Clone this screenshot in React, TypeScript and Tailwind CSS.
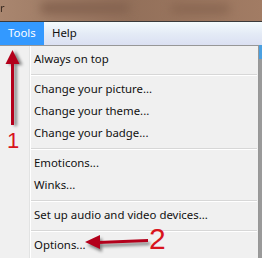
const items: (string | null)[] = [
  "Always on top",
  null,
  "Change your picture...",
  "Change your theme...",
  "Change your badge...",
  null,
  "Emoticons...",
  "Winks...",
  null,
  "Set up audio and video devices...",
  null,
  "Options...",
];

function MenuItem({ label }: { label: string }) {
  return (
    <div className="h-[22px] pl-[3px] leading-[22px] text-[11.4px] text-[#111] whitespace-nowrap">
      {label}
    </div>
  );
}

function Separator() {
  return (
    <div className="h-[8px] pt-[4px] pr-[1px]">
      <div className="border-t border-[#d7d7d7]" />
      <div className="border-t border-white" />
    </div>
  );
}

export default function App() {
  return (
    <div
      className="relative flex flex-col w-[262px] h-[258px] overflow-hidden bg-[#f0f0f0]"
      style={{ fontFamily: '"Noto Sans", "Open Sans", sans-serif' }}
    >
      {/* blurred window title behind */}
      <div className="relative h-[21px] shrink-0 overflow-hidden bg-gradient-to-r from-[#a9866f] via-[#93705a] to-[#a27c64]">
        <div className="absolute left-[40px] top-[2px] w-[90px] h-[12px] rounded-full bg-[#856350] blur-[5px]" />
        <div className="absolute left-[170px] top-[4px] w-[60px] h-[10px] rounded-full bg-[#8a6752] blur-[5px]" />
        <span className="absolute left-0 top-0 text-[11px] text-[#3a2a20] blur-[0.6px]">r</span>
      </div>
      <div className="h-[1px] shrink-0 bg-[#3a3a3a]" />

      {/* menu bar */}
      <div className="flex h-[23px] shrink-0 bg-gradient-to-b from-[#f4fbfd] via-[#e4ebf6] to-[#dbe0f2] text-[11.4px]">
        <div className="w-[44px] bg-[#3399ff] text-white pl-[8px] leading-[22px]">Tools</div>
        <div className="pl-[8px] leading-[22px] text-[#111]">Help</div>
      </div>

      {/* dropdown */}
      <div className="flex flex-1">
        <div className="flex w-[259px] border-t border-r border-[#979797] bg-[#f0f0f0]">
          <div className="w-[29px] shrink-0" />
          <div className="w-[1px] bg-[#e2e3e3]" />
          <div className="w-[1px] bg-white" />
          <div className="flex-1 pt-[2px]">
            {items.map((it, i) =>
              it ? <MenuItem key={i} label={it} /> : <Separator key={i} />
            )}
          </div>
        </div>
        <div className="flex flex-col w-[3px]">
          <div className="h-[14px] bg-[#4ba0e0]" />
          <div className="flex-1 bg-[#9a9a9a]" />
        </div>
      </div>

      {/* annotation 1 */}
      <svg
        className="absolute left-0 top-[48px] drop-shadow-[3px_1px_1.5px_rgba(0,0,0,0.45)]"
        width="30"
        height="82"
        viewBox="0 0 30 82"
      >
        <polygon points="12.5,2 5.5,16 19.5,16" fill="#b3001b" />
        <rect x="11" y="14" width="3" height="63" fill="#b3001b" />
      </svg>
      <div
        className="absolute left-[7px] top-[127px] text-[22px] leading-[28px] text-[#d8141c]"
        style={{ fontFamily: '"Liberation Sans", sans-serif' }}
      >
        1
      </div>

      {/* annotation 2 */}
      <svg
        className="absolute left-[83px] top-[232px] drop-shadow-[2px_3px_1.5px_rgba(0,0,0,0.45)]"
        width="68"
        height="20"
        viewBox="0 0 68 20"
      >
        <polygon points="2,10 17,3 17,17" fill="#b3001b" />
        <polygon points="15,9 65,7 65,10 15,12" fill="#b3001b" />
      </svg>
      <div
        className="absolute left-[149px] top-[222px] text-[30px] leading-[34px] text-[#d8141c]"
        style={{ fontFamily: '"Liberation Sans", sans-serif' }}
      >
        2
      </div>
    </div>
  );
}
